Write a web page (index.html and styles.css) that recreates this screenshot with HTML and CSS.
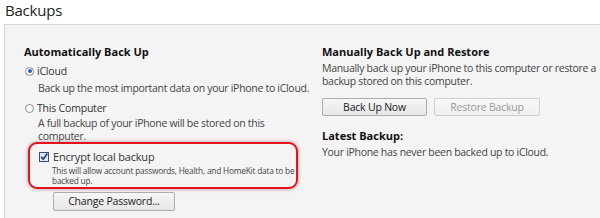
FILE: index.html
```html
<!DOCTYPE html>
<html>
<head>
<meta charset="utf-8">
<link rel="stylesheet" href="styles.css">
</head>
<body>
<div class="page-title">Backups</div>
<div class="panel">
  <div class="col col-left">
    <div class="heading">Automatically Back Up</div>
    <div class="option opt-icloud">
      <span class="radio checked"></span><span class="label">iCloud</span>
    </div>
    <div class="desc desc-icloud">Back up the most important data on your iPhone to iCloud.</div>
    <div class="option opt-computer">
      <span class="radio"></span><span class="label">This Computer</span>
    </div>
    <div class="desc desc-computer">A full backup of your iPhone will be stored on this computer.</div>
    <div class="highlight">
      <div class="option opt-encrypt">
        <svg class="checkbox" width="10" height="10" viewBox="0 0 10 10">
          <rect x="0.5" y="0.5" width="9" height="9" fill="#dfe8f6" stroke="#3b4f74"/>
          <path d="M2.2 4.8 L4.2 7.2 L8.3 1.6" fill="none" stroke="#1e3f7a" stroke-width="1.7"/>
        </svg>
        <span class="label">Encrypt local backup</span>
      </div>
      <div class="small">This will allow account passwords, Health, and HomeKit data to be backed up.</div>
    </div>
    <div class="btn-row btn-row-left">
      <button class="btn btn-change">Change Password...</button>
    </div>
  </div>
  <div class="col col-right">
    <div class="heading">Manually Back Up and Restore</div>
    <div class="desc desc-manual">Manually back up your iPhone to this computer or restore a backup stored on this computer.</div>
    <div class="btn-row">
      <button class="btn btn-now">Back Up Now</button>
      <button class="btn btn-restore" disabled>Restore Backup</button>
    </div>
    <div class="heading heading-latest">Latest Backup:</div>
    <div class="desc desc-latest">Your iPhone has never been backed up to iCloud.</div>
  </div>
</div>
</body>
</html>
```
FILE: styles.css
```css
html, body {
  margin: 0;
  padding: 0;
  background: #ffffff;
  width: 600px;
  height: 218px;
  overflow: hidden;
  font-family: "Open Sans", "Noto Sans", sans-serif;
  color: #3f3f3f;
}

.page-title {
  height: 24px;
  padding-left: 5px;
  font-size: 15px;
  line-height: 20px;
  color: #222;
  letter-spacing: -0.2px;
}

.panel {
  margin-left: 4px;
  height: 194px;
  box-sizing: border-box;
  border-top: 1px solid #d6d6d6;
  border-left: 1px solid #d6d6d6;
  background: #f4f4f4;
  display: grid;
  grid-template-columns: 298px 1fr;
  padding-left: 19px;
  padding-top: 19px;
}

.heading {
  font-size: 11px;
  font-weight: 700;
  line-height: 16px;
  color: #111;
  white-space: nowrap;
}

.option {
  display: flex;
  align-items: center;
  font-size: 10.5px;
  letter-spacing: -0.2px;
  line-height: 14px;
  color: #333;
}

.opt-icloud { margin-top: 4px; }
.opt-computer { margin-top: 6px; }

.radio {
  width: 7px;
  height: 7px;
  border: 1px solid #8c8c8c;
  border-radius: 50%;
  background: #fbfbfb;
  margin-left: 1px;
  margin-right: 3px;
  position: relative;
  box-sizing: content-box;
  flex: none;
}
.radio.checked::after {
  content: "";
  position: absolute;
  left: 1.5px;
  top: 1.5px;
  width: 4px;
  height: 4px;
  border-radius: 50%;
  background: #2a62c4;
}

.desc {
  font-size: 10.5px;
  letter-spacing: -0.3px;
  line-height: 13px;
  color: #444;
}
.col-left .desc {
  padding-left: 14px;
  width: 262px;
}
.desc-icloud { margin-top: 4px; white-space: nowrap; }
.desc-computer { margin-top: 2px; }

.highlight {
  margin-top: -1px;
  margin-left: 4px;
  width: 270px;
  height: 47px;
  box-sizing: border-box;
  border: 2.5px solid #e3121b;
  border-radius: 9px;
  box-shadow: 0 0 3px 1px rgba(120, 60, 60, 0.35);
  padding: 6px 0 0 9px;
}

.opt-encrypt .checkbox {
  margin-right: 4px;
  flex: none;
}
.opt-encrypt .label {
  font-size: 11px;
}

.small {
  font-size: 8.3px;
  letter-spacing: -0.2px;
  line-height: 10px;
  color: #444;
  padding-left: 13px;
  margin-top: 2px;
  width: 245px;
}

.btn-row {
  display: flex;
  gap: 7px;
  margin-top: 10px;
}
.btn-row-left {
  margin-top: 3px;
  padding-left: 29px;
}

.btn {
  font-family: "Open Sans", "Noto Sans", sans-serif;
  font-size: 10.5px;
  letter-spacing: -0.2px;
  color: #222;
  height: 18px;
  padding: 0;
  box-sizing: border-box;
  border: 1px solid #acacac;
  border-radius: 2px;
  background: linear-gradient(#f6f6f6, #e6e6e6);
  line-height: 15px;
}
.btn-change { width: 122px; height: 19px; }
.btn-now { width: 105px; }
.btn-restore { width: 106px; color: #9a9a9a; border-color: #cfcfcf; background: linear-gradient(#f7f7f7, #efefef); }

.col-right .desc {
  width: 275px;
  margin-top: 2px;
  line-height: 13px;
}

.heading-latest { margin-top: 12px; }
.col-right .desc-latest { margin-top: 2px; }
```
